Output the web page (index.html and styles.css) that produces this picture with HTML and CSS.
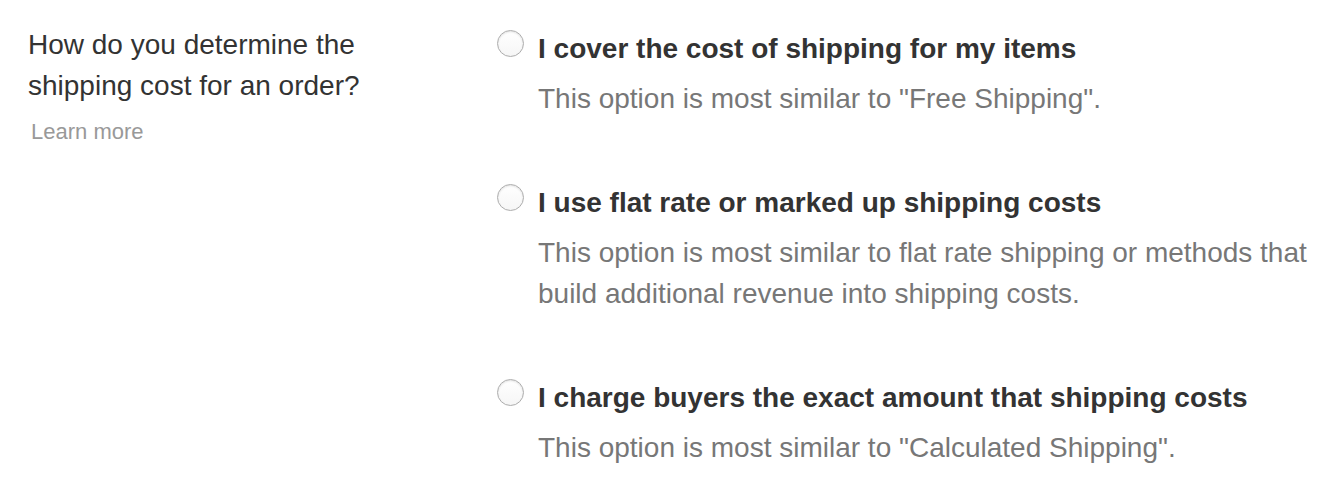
FILE: index.html
```html
<!DOCTYPE html>
<html>
<head>
<meta charset="utf-8">
<link rel="stylesheet" href="styles.css">
</head>
<body>
<div class="page">
  <div class="question">
    <p class="q-text">How do you determine the shipping cost for an order?</p>
    <a class="learn" href="#">Learn more</a>
  </div>
  <div class="options">
    <label class="option">
      <span class="radio"></span>
      <span class="opt-body">
        <span class="opt-title">I cover the cost of shipping for my items</span>
        <span class="opt-desc">This option is most similar to "Free Shipping".</span>
      </span>
    </label>
    <label class="option">
      <span class="radio"></span>
      <span class="opt-body">
        <span class="opt-title">I use flat rate or marked up shipping costs</span>
        <span class="opt-desc">This option is most similar to flat rate shipping or methods that build additional revenue into shipping costs.</span>
      </span>
    </label>
    <label class="option">
      <span class="radio"></span>
      <span class="opt-body">
        <span class="opt-title">I charge buyers the exact amount that shipping costs</span>
        <span class="opt-desc">This option is most similar to "Calculated Shipping".</span>
      </span>
    </label>
  </div>
</div>
</body>
</html>
```
FILE: styles.css
```css
html, body {
  margin: 0;
  padding: 0;
  background: #fff;
}
body {
  font-family: "Liberation Sans", Arial, sans-serif;
}
.page {
  display: flex;
  padding: 24px 0 0 28px;
}
.question {
  width: 469px;
  flex: none;
}
.q-text {
  margin: 0;
  width: 360px;
  font-size: 28px;
  line-height: 41px;
  color: #333;
}
.learn {
  display: block;
  margin: 13px 0 0 3px;
  font-size: 22px;
  line-height: 26px;
  color: #999;
  text-decoration: none;
}
.options {
  display: flex;
  flex-direction: column;
  gap: 63px;
  margin-top: 4px;
  flex: 1;
  padding-right: 14px;
}
.option {
  display: flex;
  gap: 14px;
}
.radio {
  flex: none;
  box-sizing: border-box;
  width: 27px;
  height: 27px;
  margin-top: 2px;
  border: 1px solid #adadad;
  border-radius: 50%;
  background: linear-gradient(#fff, #f6f6f6);
  box-shadow: inset 0 1px 2px rgba(0,0,0,0.12);
}
.opt-body {
  display: flex;
  flex-direction: column;
  gap: 9px;
}
.opt-title {
  font-weight: bold;
  font-size: 28px;
  line-height: 41px;
  color: #333;
}
.opt-desc {
  font-size: 28px;
  line-height: 41px;
  color: #777;
}
```
